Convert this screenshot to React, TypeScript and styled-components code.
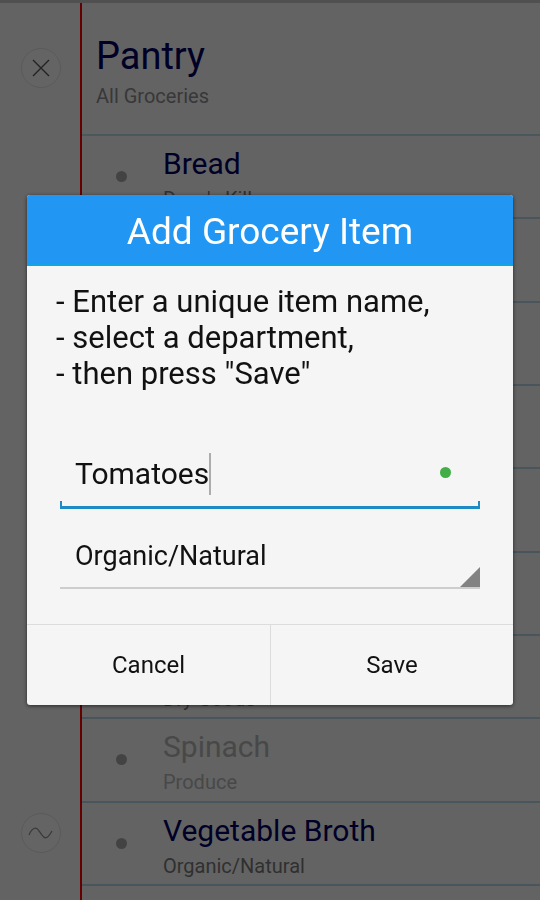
import React, { useState } from "react";
import styled, { createGlobalStyle } from "styled-components";

const GlobalStyle = createGlobalStyle`
  *, *::before, *::after { box-sizing: border-box; }
  body { margin: 0; background: #f8f8f8; font-family: Roboto, "Liberation Sans", sans-serif; }
  button, input, select { font: inherit; color: inherit; }
`;

const Page = styled.main`
  display: grid;
  grid-template-columns: 82px 1fr;
  min-height: 100vh;
  background: #f8f8f8;
  border-top: 3px solid #c8c8c8;
`;

const Margin = styled.aside`
  display: flex;
  flex-direction: column;
  align-items: center;
  justify-content: space-between;
  padding: 45px 0 47px;
  border-right: 2px solid #ff0000;
`;

const RoundButton = styled.button<{ $faint?: boolean }>`
  display: grid;
  place-items: center;
  width: 40px;
  height: 40px;
  margin: 0 0 0 2px;
  padding: 0;
  border: 1px solid #e0e0e0;
  border-radius: 50%;
  background: #fafafa;
  color: ${(p) => (p.$faint ? "#909090" : "#585858")};
`;

const Sheet = styled.section`
  display: flex;
  flex-direction: column;
  min-width: 0;
`;

const Heading = styled.header`
  height: 133px;
  padding: 31px 14px 0;
  border-bottom: 2px solid #b8dce8;
`;

const PageTitle = styled.h1`
  margin: 0;
  font-size: 38px;
  line-height: 44px;
  font-weight: 400;
  color: #000060;
`;

const Subtitle = styled.p`
  margin: 5px 0 0;
  font-size: 20px;
  line-height: 26px;
  color: #8c8c8c;
`;

const List = styled.ul`
  flex: 1;
  display: grid;
  grid-auto-rows: 1fr;
  margin: 0;
  padding: 0 0 14px;
  list-style: none;
`;

const Row = styled.li<{ $muted?: boolean }>`
  display: grid;
  grid-template-columns: 81px 1fr;
  min-height: 83px;
  border-bottom: 2px solid #b4d4e8;
  color: ${(p) => (p.$muted ? "#b4b4b4" : "#000060")};
`;

const Bullet = styled.span`
  width: 11px;
  height: 11px;
  margin: 35px 0 0 34px;
  border-radius: 50%;
  background: #a8a8a8;
`;

const ItemName = styled.div`
  min-height: 36px;
  margin-top: 10px;
  font-size: 30px;
  line-height: 36px;
`;

const Department = styled.div<{ $muted?: boolean }>`
  font-size: 20px;
  line-height: 34px;
  color: ${(p) => (p.$muted ? "#b4b4b4" : "#787878")};
`;

const Backdrop = styled.div`
  position: fixed;
  inset: 0;
  display: flex;
  align-items: center;
  justify-content: center;
  padding: 0 27px;
  background: rgba(0, 0, 0, 0.6);
`;

const Dialog = styled.form`
  width: 100%;
  max-width: 640px;
  overflow: hidden;
  border-radius: 3px;
  background: #f5f5f5;
  color: #111;
  box-shadow: 0 1px 4px rgba(0, 0, 0, 0.6);
`;

const DialogTitle = styled.h2`
  margin: 0;
  padding: 17px 0 12px;
  border-bottom: 2px solid #12a5e3;
  background: #2196f3;
  color: #fff;
  font-size: 37px;
  line-height: 40px;
  font-weight: 400;
  text-align: center;
`;

const Body = styled.div`
  padding: 18px 33px 35px;
`;

const Steps = styled.ul`
  margin: 0 0 46px -4px;
  padding: 0;
  list-style: none;
  font-size: 31px;
  line-height: 36px;
`;

const NameField = styled.div`
  display: flex;
  align-items: center;
  height: 71px;
  padding: 0 29px 0 15px;
  background:
    linear-gradient(#1f8bc4, #1f8bc4) left bottom / 2px 8px no-repeat,
    linear-gradient(#1f8bc4, #1f8bc4) right bottom / 2px 8px no-repeat,
    linear-gradient(#1f8bc4, #1f8bc4) left bottom / 100% 3px no-repeat;
`;

const Entry = styled.div`
  position: relative;
  flex: 1;
  display: flex;
  align-items: center;
  min-width: 0;
`;

const NameInput = styled.input`
  width: 100%;
  padding: 0;
  border: 0;
  outline: 0;
  background: transparent;
  font-size: 30px;
  line-height: 44px;
  caret-color: transparent;
`;

const CaretTrack = styled.span`
  position: absolute;
  left: 0;
  top: 0;
  display: flex;
  align-items: center;
  height: 100%;
  font-size: 30px;
  pointer-events: none;
  white-space: pre;

  &::before {
    content: attr(data-value);
    visibility: hidden;
  }

  &::after {
    content: "";
    width: 2px;
    height: 42px;
    background: #adadad;
  }
`;

const ValidDot = styled.span`
  width: 11px;
  height: 11px;
  margin-bottom: 2px;
  border-radius: 50%;
  background: #43ad48;
`;

const DepartmentField = styled.div`
  display: grid;
  margin-top: 12px;
  border-bottom: 2px solid #cdcdcd;

  & > * { grid-area: 1 / 1; }
`;

const DepartmentSelect = styled.select`
  height: 66px;
  padding: 4px 24px 0 15px;
  border: 0;
  outline: 0;
  appearance: none;
  background: transparent;
  font-size: 27px;
`;

const Corner = styled.svg`
  place-self: end;
  pointer-events: none;
`;

const Actions = styled.div`
  display: grid;
  grid-template-columns: 1fr 1fr;
  border-top: 1px solid #dcdcdc;
`;

const ActionButton = styled.button`
  height: 80px;
  padding: 0;
  border: 0;
  background: transparent;
  font-size: 24px;

  & + & { border-left: 1px solid #dcdcdc; }
`;

type Item = { id: number; name?: string; department?: string; muted?: boolean };

const items: Item[] = [
  { id: 1, name: "Bread", department: "Dave's Killer" },
  { id: 2 },
  { id: 3 },
  { id: 4 },
  { id: 5 },
  { id: 6 },
  { id: 7, department: "Dry Goods" },
  { id: 8, name: "Spinach", department: "Produce", muted: true },
  { id: 9, name: "Vegetable Broth", department: "Organic/Natural" },
];

export default function App() {
  const [name, setName] = useState("Tomatoes");
  return (
    <>
      <GlobalStyle />
      <Page>
        <Margin>
          <RoundButton aria-label="Close">
            <svg width="20" height="20" viewBox="0 0 20 20" stroke="currentColor" strokeWidth="1.4">
              <path d="M2 2 18 18M18 2 2 18" />
            </svg>
          </RoundButton>
          <RoundButton aria-label="Scribble" $faint>
            <svg width="26" height="20" viewBox="0 0 26 20" fill="none" stroke="currentColor" strokeWidth="1.3">
              <path d="M1 12C4 5 8 3 11 8L14 12C17 17 20 15 24 8" />
            </svg>
          </RoundButton>
        </Margin>
        <Sheet>
          <Heading>
            <PageTitle>Pantry</PageTitle>
            <Subtitle>All Groceries</Subtitle>
          </Heading>
          <List>
            {items.map((item) => (
              <Row key={item.id} $muted={item.muted}>
                <Bullet />
                <div>
                  <ItemName>{item.name}</ItemName>
                  <Department $muted={item.muted}>{item.department}</Department>
                </div>
              </Row>
            ))}
          </List>
        </Sheet>
      </Page>
      <Backdrop>
        <Dialog role="dialog" aria-labelledby="dialog-title" onSubmit={(e) => e.preventDefault()}>
          <DialogTitle id="dialog-title">Add Grocery Item</DialogTitle>
          <Body>
            <Steps>
              <li>- Enter a unique item name,</li>
              <li>- select a department,</li>
              <li>- then press "Save"</li>
            </Steps>
            <NameField>
              <Entry>
                <NameInput aria-label="Item name" value={name} onChange={(e) => setName(e.target.value)} />
                <CaretTrack aria-hidden="true" data-value={name} />
              </Entry>
              <ValidDot />
            </NameField>
            <DepartmentField>
              <DepartmentSelect aria-label="Department" defaultValue="Organic/Natural">
                <option>Organic/Natural</option>
                <option>Produce</option>
              </DepartmentSelect>
              <Corner width="20" height="20" viewBox="0 0 20 20">
                <path d="M20 0V20H0Z" fill="#828282" />
              </Corner>
            </DepartmentField>
          </Body>
          <Actions>
            <ActionButton type="button">Cancel</ActionButton>
            <ActionButton type="submit">Save</ActionButton>
          </Actions>
        </Dialog>
      </Backdrop>
    </>
  );
}
